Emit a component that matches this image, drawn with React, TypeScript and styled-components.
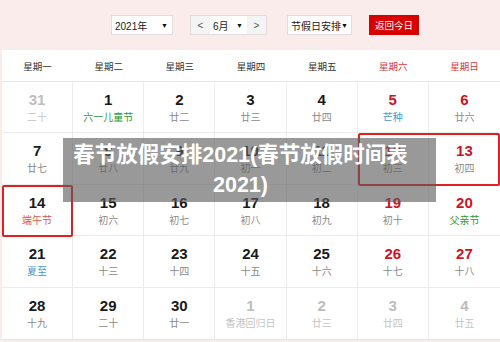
import React from "react";
import styled, { createGlobalStyle } from "styled-components";

const Global = createGlobalStyle`
  html, body { margin: 0; padding: 0; }
  body {
    width: 500px;
    height: 342px;
    overflow: hidden;
    background: #f9ecea;
    font-family: "Liberation Sans", "Noto Sans CJK SC", Arial, sans-serif;
  }
`;

const Page = styled.div`
  position: relative;
  width: 500px;
  height: 342px;
`;

const Toolbar = styled.div`
  height: 50px;
  display: flex;
  align-items: center;
  padding-left: 111px;
  box-sizing: border-box;
`;

const Select = styled.div<{ $w: number; $ml?: number }>`
  width: ${(p) => p.$w}px;
  margin-left: ${(p) => p.$ml ?? 0}px;
  height: 20px;
  box-sizing: border-box;
  background: #fff;
  border: 1px solid #e4dcdb;
  display: flex;
  align-items: center;
  justify-content: space-between;
  padding: 0 4px 0 3px;
  font-size: 10px;
  color: #222;
  white-space: nowrap;
`;

const Arrow = styled.span`
  font-size: 7px;
  color: #111;
`;

const Group = styled.div`
  margin-left: 17px;
  height: 20px;
  display: flex;
  border: 1px solid #e4dcdb;
  box-sizing: border-box;
  background: #fff;
`;

const NavBtn = styled.div`
  width: 19px;
  background: #f4f4f4;
  display: flex;
  align-items: center;
  justify-content: center;
  font-size: 10px;
  color: #555;
`;

const GroupSelect = styled.div`
  width: 37px;
  display: flex;
  align-items: center;
  justify-content: space-between;
  padding: 0 4px 0 3px;
  box-sizing: border-box;
  font-size: 10px;
  color: #222;
  background: #fff;
`;

const TodayBtn = styled.div`
  margin-left: 17px;
  width: 50px;
  height: 20px;
  background: #d90000;
  color: #fff;
  font-size: 9.5px;
  display: flex;
  align-items: center;
  justify-content: center;
  white-space: nowrap;
`;

const Calendar = styled.div`
  margin-left: 2px;
  background: #fff;
`;

const WeekRow = styled.div`
  display: grid;
  grid-template-columns: repeat(7, 1fr);
  height: 32px;
  border-bottom: 1px solid #f6e4e2;
  box-sizing: border-box;
`;

const WeekName = styled.div<{ $red?: boolean }>`
  display: flex;
  align-items: center;
  justify-content: center;
  font-size: 9.5px;
  color: ${(p) => (p.$red ? "#d9383a" : "#333")};
`;

const Grid = styled.div`
  display: grid;
  grid-template-columns: repeat(7, 1fr);
  grid-template-rows: repeat(5, 1fr);
  height: 258px;
  border-bottom: 1px solid #e6e6e6;
  box-sizing: border-box;
`;

const Cell = styled.div<{ $r: number; $c: number }>`
  grid-row: ${(p) => p.$r};
  grid-column: ${(p) => p.$c};
  border-right: ${(p) => (p.$c < 7 ? "1px solid #ececec" : "none")};
  border-bottom: ${(p) => (p.$r < 5 ? "1px solid #ececec" : "none")};
  display: flex;
  flex-direction: column;
  align-items: center;
  padding-top: 9px;
  box-sizing: border-box;
`;

const DayNum = styled.div<{ $tone: string }>`
  font-size: 15px;
  font-weight: bold;
  line-height: 18px;
  color: ${(p) => p.$tone};
`;

const Lunar = styled.div<{ $tone: string }>`
  font-size: 10px;
  line-height: 18px;
  color: ${(p) => p.$tone};
`;

const Highlight = styled.div<{ $r: number; $c: string }>`
  grid-row: ${(p) => p.$r};
  grid-column: ${(p) => p.$c};
  border: 2px solid #e0201e;
  border-radius: 2px;
  margin: 0 0 -1px 0;
  z-index: 1;
  pointer-events: none;
`;

const Banner = styled.div`
  position: absolute;
  left: 63px;
  top: 138px;
  width: 373px;
  height: 64px;
  box-sizing: border-box;
  padding: 2px 18px 2px 0;
  background: rgba(90, 90, 90, 0.62);
  color: #fff;
  font-size: 21.5px;
  font-weight: bold;
  line-height: 30px;
  text-align: center;
  z-index: 2;
`;

type Day = { d: number; l: string; num: string; lc: string };

const BLACK = "#1a1a1a";
const RED = "#cf1322";
const GREY = "#bdbdbd";
const LG = "#8a8a8a";
const GREEN = "#2e9a2e";
const BLUE = "#4b97cf";
const PINK = "#d9534f";
const LIGHT = "#c4c4c4";

const days: Day[] = [
  { d: 31, l: "二十", num: GREY, lc: LIGHT },
  { d: 1, l: "六一儿童节", num: BLACK, lc: GREEN },
  { d: 2, l: "廿二", num: BLACK, lc: LG },
  { d: 3, l: "廿三", num: BLACK, lc: LG },
  { d: 4, l: "廿四", num: BLACK, lc: LG },
  { d: 5, l: "芒种", num: RED, lc: BLUE },
  { d: 6, l: "廿六", num: RED, lc: LG },
  { d: 7, l: "廿七", num: BLACK, lc: LG },
  { d: 8, l: "廿八", num: BLACK, lc: LG },
  { d: 9, l: "廿九", num: BLACK, lc: LG },
  { d: 10, l: "初一", num: BLACK, lc: LG },
  { d: 11, l: "初二", num: BLACK, lc: LG },
  { d: 12, l: "初三", num: RED, lc: LG },
  { d: 13, l: "初四", num: RED, lc: LG },
  { d: 14, l: "端午节", num: BLACK, lc: PINK },
  { d: 15, l: "初六", num: BLACK, lc: LG },
  { d: 16, l: "初七", num: BLACK, lc: LG },
  { d: 17, l: "初八", num: BLACK, lc: LG },
  { d: 18, l: "初九", num: BLACK, lc: LG },
  { d: 19, l: "初十", num: RED, lc: LG },
  { d: 20, l: "父亲节", num: RED, lc: GREEN },
  { d: 21, l: "夏至", num: BLACK, lc: BLUE },
  { d: 22, l: "十三", num: BLACK, lc: LG },
  { d: 23, l: "十四", num: BLACK, lc: LG },
  { d: 24, l: "十五", num: BLACK, lc: LG },
  { d: 25, l: "十六", num: BLACK, lc: LG },
  { d: 26, l: "十七", num: RED, lc: LG },
  { d: 27, l: "十八", num: RED, lc: LG },
  { d: 28, l: "十九", num: BLACK, lc: LG },
  { d: 29, l: "二十", num: BLACK, lc: LG },
  { d: 30, l: "廿一", num: BLACK, lc: LG },
  { d: 1, l: "香港回归日", num: GREY, lc: LIGHT },
  { d: 2, l: "廿三", num: GREY, lc: LIGHT },
  { d: 3, l: "廿四", num: GREY, lc: LIGHT },
  { d: 4, l: "廿五", num: GREY, lc: LIGHT },
];

const weekNames = ["星期一", "星期二", "星期三", "星期四", "星期五", "星期六", "星期日"];

export default function App() {
  return (
    <Page>
      <Global />
      <Toolbar>
        <Select $w={62}>
          <span>2021年</span>
          <Arrow>▼</Arrow>
        </Select>
        <Group>
          <NavBtn>&lt;</NavBtn>
          <GroupSelect>
            <span>6月</span>
            <Arrow>▼</Arrow>
          </GroupSelect>
          <NavBtn>&gt;</NavBtn>
        </Group>
        <Select $w={65} $ml={20}>
          <span>节假日安排</span>
          <Arrow>▼</Arrow>
        </Select>
        <TodayBtn>返回今日</TodayBtn>
      </Toolbar>
      <Calendar>
        <WeekRow>
          {weekNames.map((w, i) => (
            <WeekName key={w} $red={i >= 5}>
              {w}
            </WeekName>
          ))}
        </WeekRow>
        <Grid>
          {days.map((day, i) => (
            <Cell key={i} $r={Math.floor(i / 7) + 1} $c={(i % 7) + 1}>
              <DayNum $tone={day.num}>{day.d}</DayNum>
              <Lunar $tone={day.lc}>{day.l}</Lunar>
            </Cell>
          ))}
          <Highlight $r={3} $c="1" />
          <Highlight $r={2} $c="6 / span 2" />
        </Grid>
      </Calendar>
      <Banner>春节放假安排2021(春节放假时间表2021)</Banner>
    </Page>
  );
}
